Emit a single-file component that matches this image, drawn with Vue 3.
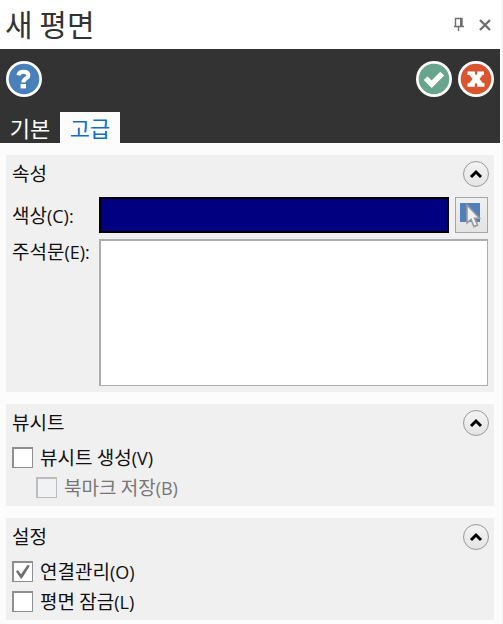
<script setup>
import { reactive, ref } from 'vue'

const tabs = ['기본', '고급']
const activeTab = ref('고급')
const note = ref('')
const open = reactive({ props: true, sheet: true, settings: true })
const sheet = reactive({ create: false, bookmark: false })
const settings = ref([
  { id: 'assoc', label: '연결관리', key: '(O)', checked: true },
  { id: 'lock', label: '평면 잠금', key: '(L)', checked: false },
])
</script>

<template>
  <main class="panel">
    <header class="titlebar">
      <h1>새 평면</h1>
      <button class="plain" type="button" aria-label="고정">
        <svg width="12" height="16" viewBox="0 0 12 16" fill="none" stroke="#6e6e6e">
          <path d="M2.5 9V1.5H9V9M1 9.5H11M5.5 10V14" stroke-width="1.4" />
          <path d="M8 1V9" stroke-width="2" />
        </svg>
      </button>
      <button class="plain" type="button" aria-label="닫기">
        <svg width="12" height="12" viewBox="0 0 12 12" fill="none" stroke="#6e6e6e" stroke-width="2.4">
          <path d="M1 1L11 11M11 1L1 11" />
        </svg>
      </button>
    </header>

    <section class="ribbon">
      <div class="actions">
        <button class="round" type="button" aria-label="도움말">
          <svg width="36" height="36" viewBox="0 0 36 36">
            <circle cx="18" cy="18" r="18" fill="#fff" />
            <circle cx="18" cy="18" r="15.3" fill="#4a80b9" />
            <path d="M12.4 14.4C12.8 11.7 15 10.8 17.6 10.8C20.6 10.8 22.4 12.2 22.4 14.4C22.4 17.6 17.4 17.3 17.4 21.4" fill="none" stroke="#fff" stroke-width="4" />
            <rect x="14.6" y="23" width="5.4" height="4.4" fill="#fff" />
          </svg>
        </button>
        <span class="spacer"></span>
        <button class="round" type="button" aria-label="확인">
          <svg width="36" height="36" viewBox="0 0 36 36">
            <circle cx="18" cy="18" r="18" fill="#fff" />
            <circle cx="18" cy="18" r="15.3" fill="#68a48e" />
            <path d="M7.8 19L11.6 15.4L15.6 19.4L24.3 10.8L28.2 14.4L15.7 27Z" fill="#fff" />
          </svg>
        </button>
        <button class="round" type="button" aria-label="취소">
          <svg width="36" height="36" viewBox="0 0 36 36">
            <circle cx="18" cy="18" r="18" fill="#fff" />
            <circle cx="18" cy="18" r="15.3" fill="#d9552f" />
            <path d="M9.5 10.5H17V13L18 14.2L19.2 13V10.5H26V14H24.5L21.5 18L25 22.3H26.5V25.8H19.2V23.2L18 21.8L16.8 23.2V25.8H9.5V22.3H11.2L14.6 18L11.5 14H9.5Z" fill="#fff" />
          </svg>
        </button>
      </div>
      <nav class="tabs">
        <button
          v-for="tab in tabs"
          :key="tab"
          type="button"
          :class="['tab', { active: tab === activeTab }]"
          @click="activeTab = tab"
        >{{ tab }}</button>
      </nav>
    </section>

    <div class="groups">
      <section class="group">
        <div class="group-head">
          <h2>속성</h2>
          <button class="toggle" type="button" aria-label="속성 접기" @click="open.props = !open.props">
            <svg width="14" height="10" viewBox="0 0 14 10"><path d="M2 8L7 3L12 8" fill="none" stroke="#000" stroke-width="3" /></svg>
          </button>
        </div>
        <div v-if="open.props" class="fields">
          <label for="color">색상<span class="key">(C):</span></label>
          <div class="color-row">
            <button id="color" class="swatch" type="button"></button>
            <button class="pick" type="button" aria-label="색상 선택">
              <svg width="24" height="28" viewBox="0 0 24 28">
                <rect x="0" y="2" width="20" height="19" fill="#5080bb" />
                <path d="M7 4V22L11 18.4L14 25.6L17.6 24L14.6 17.2H19.4Z" fill="#f2f2f2" stroke="#9a9a9a" stroke-width="1.6" />
              </svg>
            </button>
          </div>
          <label for="note">주석문<span class="key">(E):</span></label>
          <textarea id="note" v-model="note"></textarea>
        </div>
      </section>

      <section class="group">
        <div class="group-head">
          <h2>뷰시트</h2>
          <button class="toggle" type="button" aria-label="뷰시트 접기" @click="open.sheet = !open.sheet">
            <svg width="14" height="10" viewBox="0 0 14 10"><path d="M2 8L7 3L12 8" fill="none" stroke="#000" stroke-width="3" /></svg>
          </button>
        </div>
        <div v-if="open.sheet" class="checks">
          <label class="check">
            <input v-model="sheet.create" type="checkbox" />
            <span>뷰시트 생성<span class="key">(V)</span></span>
          </label>
          <label :class="['check', 'nested', { disabled: !sheet.create }]">
            <input v-model="sheet.bookmark" type="checkbox" :disabled="!sheet.create" />
            <span>북마크 저장<span class="key">(B)</span></span>
          </label>
        </div>
      </section>

      <section class="group">
        <div class="group-head">
          <h2>설정</h2>
          <button class="toggle" type="button" aria-label="설정 접기" @click="open.settings = !open.settings">
            <svg width="14" height="10" viewBox="0 0 14 10"><path d="M2 8L7 3L12 8" fill="none" stroke="#000" stroke-width="3" /></svg>
          </button>
        </div>
        <div v-if="open.settings" class="checks">
          <label v-for="item in settings" :key="item.id" class="check">
            <input v-model="item.checked" type="checkbox" />
            <span>{{ item.label }}<span class="key">{{ item.key }}</span></span>
          </label>
        </div>
      </section>
    </div>
  </main>
</template>

<style>
body {
  margin: 0;
  background: #fcfcfc;
}
</style>

<style scoped>
.panel {
  box-sizing: border-box;
  min-height: 100vh;
  padding-right: 2px;
  border-right: 1px solid #f0f0f0;
  color: #111;
  font: 19px/30px "Noto Sans CJK KR", sans-serif;
}
button {
  padding: 0;
  border: 0;
  background: none;
  color: inherit;
  font: inherit;
}
svg {
  display: block;
}
.key {
  font-family: "Open Sans", "Noto Sans", sans-serif;
  font-size: 18px;
  line-height: 1;
}
.titlebar {
  display: flex;
  align-items: center;
  gap: 14px;
  height: 49px;
  padding: 0 9px 0 5px;
  background: #fff;
}
h1 {
  flex: 1;
  margin: 0;
  color: #333;
  font-size: 30px;
  font-weight: 400;
  line-height: 46px;
  padding-bottom: 4px;
}
.ribbon {
  background: #333;
}
.actions {
  display: flex;
  gap: 6px;
  padding: 12px 6px 15px;
}
.spacer {
  flex: 1;
}
.tabs {
  display: flex;
}
.tab {
  width: 60px;
  height: 31px;
  color: #fff;
  font-size: 22px;
  line-height: 31px;
}
.tab.active {
  background: #fcfcfc;
  color: #0f6fc6;
}
.groups {
  display: flex;
  flex-direction: column;
  gap: 12px;
  padding: 12px 6px 4px;
}
.group {
  background: #f0f0f0;
}
.group-head {
  display: flex;
  align-items: center;
  justify-content: space-between;
  height: 38px;
  padding: 0 5px 0 6px;
}
h2 {
  margin: 0;
  font-size: 19px;
  font-weight: 400;
  line-height: 28px;
  padding-bottom: 2px;
}
.toggle {
  display: grid;
  place-items: center;
  box-sizing: border-box;
  width: 26px;
  height: 26px;
  border: 1px solid #999;
  border-radius: 50%;
  background: linear-gradient(#f4f4f4, #e4e4e4);
}
.fields {
  display: grid;
  grid-template-columns: 81px 1fr;
  gap: 6px;
  padding: 4px 6px 6px;
}
.fields label {
  padding-top: 3px;
  line-height: 30px;
  white-space: nowrap;
}
.fields label[for="note"] {
  padding-top: 0;
  line-height: 24px;
}
.color-row {
  display: flex;
  gap: 6px;
}
.swatch {
  flex: 1;
  height: 36px;
  border: 2px solid #000;
  background: #000080;
}
.pick {
  display: grid;
  place-items: center;
  box-sizing: border-box;
  width: 33px;
  height: 36px;
  border: 1px solid #a5a5a5;
  background: linear-gradient(#f0f0f0, #e3e3e3);
}
textarea {
  box-sizing: border-box;
  width: 100%;
  height: 147px;
  margin: 0;
  padding: 4px;
  border: 1px solid #abadb3;
  border-width: 2px 1px 1px 2px;
  border-radius: 0;
  background: #fff;
  font: inherit;
  resize: none;
}
.checks {
  padding: 0 6px 4px;
}
.check {
  display: flex;
  align-items: center;
  gap: 7px;
  height: 30px;
}
.nested {
  padding-left: 24px;
}
.disabled {
  color: #777;
}
.check input {
  appearance: none;
  display: grid;
  place-items: center;
  box-sizing: border-box;
  width: 21px;
  height: 21px;
  margin: 0;
  border: 2px solid #8e8f8f;
  border-width: 2px 1px 1px 2px;
  background: #fff;
}
.check input:disabled {
  border-color: #bcbcbc;
  background: #f0f2f4;
}
.check input:checked::before {
  content: "";
  width: 14px;
  height: 14px;
  background: #707070;
  clip-path: polygon(0 50%, 14% 40%, 36% 70%, 84% 0, 98% 10%, 42% 100%, 34% 100%);
}
</style>
